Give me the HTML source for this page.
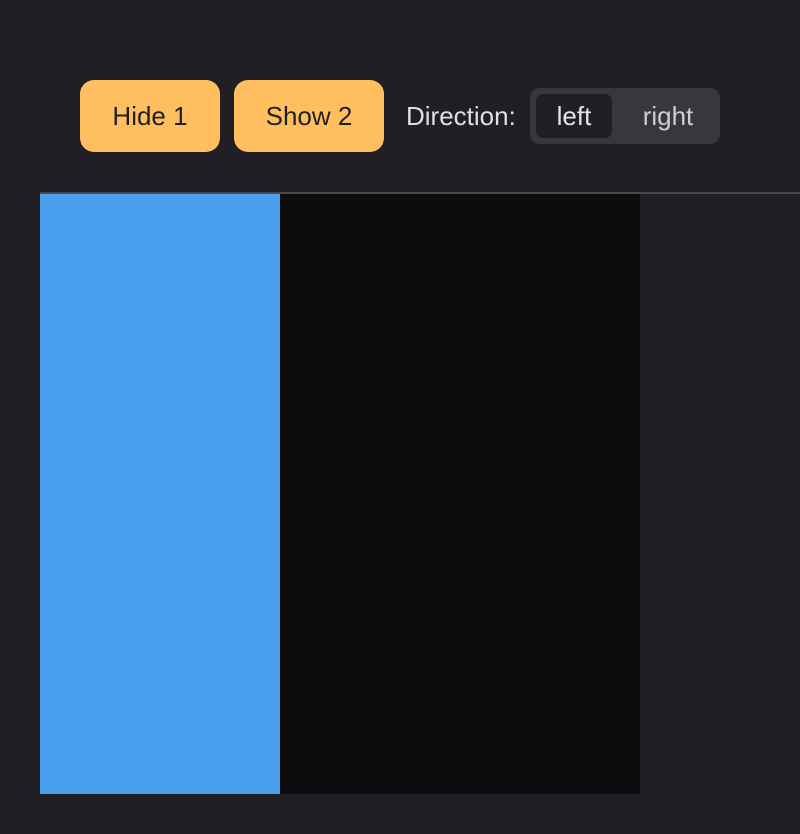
<!DOCTYPE html>
<html><head><meta charset="utf-8"><style>
html,body{margin:0;padding:0;width:800px;height:834px;background:#221f24;overflow:hidden;font-family:"Liberation Sans",sans-serif;}
.btn{position:absolute;top:80px;height:72px;background:#ffbf5f;border-radius:14px;color:#221f24;font-size:26px;display:flex;align-items:center;justify-content:center;}
.lbl{position:absolute;left:406px;top:80px;height:72px;line-height:72px;font-size:26px;color:#e0dee2;}
.seg{position:absolute;left:530px;top:88px;width:190px;height:56px;background:#39363c;border-radius:10px;}
.opt{position:absolute;top:6px;height:44px;line-height:44px;font-size:26px;text-align:center;color:#cfcdd2;}
.on{background:#221f24;border-radius:7px;color:#e6e4e8;}
.line{position:absolute;left:40px;top:192px;width:760px;height:2px;background:#4a474d;}
</style></head><body>
<div class="btn" style="left:80px;width:140px;">Hide 1</div>
<div class="btn" style="left:234px;width:150px;">Show 2</div>
<div class="lbl">Direction:</div>
<div class="seg">
<div class="opt on" style="left:6px;width:76px;">left</div>
<div class="opt" style="left:100px;width:76px;">right</div>
</div>
<div class="line"></div>
<div style="position:absolute;left:40px;top:194px;width:240px;height:600px;background:#4a9fef;"></div>
<div style="position:absolute;left:280px;top:194px;width:360px;height:600px;background:#0e0c0f;"></div>
</body></html>
